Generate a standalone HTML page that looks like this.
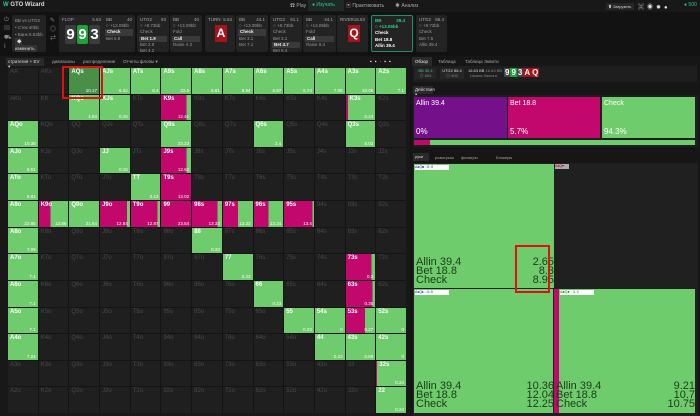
<!DOCTYPE html>
<html><head><meta charset="utf-8"><style>
*{box-sizing:border-box;margin:0;padding:0}
body{width:700px;height:416px;overflow:hidden;background:#121212;font-family:"Liberation Sans","Noto Sans CJK SC",sans-serif;color:#ccc;position:relative}
.a{position:absolute}
.top{left:0;top:0;width:700px;height:12px;background:#181818}
.card{background:#232323;border-radius:2px;top:15px;height:37px;font-size:4.5px;color:#999;padding:2px 3px;line-height:6.2px}
.card .h{display:flex;justify-content:space-between;color:#aaa}
.card .s{background:#3a3a3a;color:#eee;font-weight:bold;padding:0 2px;margin:0 -1px}
.pc{width:11px;height:19px;border-radius:2px;color:#fff;font-weight:bold;font-size:15px;text-align:center;line-height:19px;display:inline-block}
#grid{left:8px;top:68px;width:398px;height:345px;display:grid;grid-template-columns:repeat(13,1fr);grid-template-rows:repeat(13,1fr);gap:1px;background:#141414}
.c{background:#1f1f1f;position:relative;font-size:6px;color:#4a4a4a;padding:1px 2px}
.c b{font-weight:normal}
.g{background:#6fcc6c;color:#fff}
.g b,.m b{font-weight:bold;color:#fff}
.m{background:#c2086c}
.c i{position:absolute;right:2px;bottom:1px;font-style:normal;font-size:4.5px;color:#fff}
.tab{font-size:4.5px;color:#aaa;top:60px}
.hand{font-size:11px;color:#1c3a1c;line-height:9px}
</style></head><body>
<div class="a top"></div>
<div class="a" style="left:3px;top:2px;font-size:6px;color:#ddd;font-weight:bold"><span style="color:#2ecc8a">W</span> GTO Wizard</div>
<div class="a" style="left:290px;top:2px;font-size:5px;color:#aaa">☎ Play</div>
<div class="a" style="left:308px;top:0;width:36px;height:11px;background:#1e2a26"></div>
<div class="a" style="left:312px;top:2px;font-size:5px;color:#2ecc8a">● Изучать</div>
<div class="a" style="left:346px;top:2px;font-size:5px;color:#aaa">▣ Практиковать</div>
<div class="a" style="left:395px;top:2px;font-size:5px;color:#aaa">☀ Анализ</div>
<div class="a" style="left:606px;top:3px;width:28px;height:7px;background:#262626;font-size:4px;color:#ddd;padding:1px 2px">⬆ Загрузить</div>
<div class="a" style="left:638px;top:2px;font-size:6px;color:#ddd;letter-spacing:3px">⌘◉✹●</div>
<div class="a" style="left:684px;top:2px;font-size:5px;color:#2ecc8a">● 500</div>

<div class="a" style="left:4px;top:16px;font-size:6px;color:#888;line-height:9px">⏻<br>▤<br>⛟<br>I</div>
<div class="a card" style="left:12px;width:34px;line-height:7px">BB vs UTG2<br>• Стек 40bb<br>• Банк 5.63bb<br><span style="background:#333;color:#ddd;padding:1px 2px">◆ изменить</span></div>
<div class="a" style="left:50px;top:17px;font-size:6px;color:#888;line-height:9px">✎<br>◎<br>⇄</div>
<div class="a card" style="left:59px;width:45px"><div class="h"><span>FLOP</span><span>5.63</span></div>
<div style="margin-top:2px;margin-left:3px"><span class="pc" style="background:#3c3c3c">9</span><span class="pc" style="background:#1ea33b;margin:0 1px">9</span><span class="pc" style="background:#3c3c3c">3</span></div></div>
<div class="a card" style="left:103px;width:32px"><div class="h"><span>BB</span><span>40</span></div>○ +13.09bb<div class="s">Check</div>Bet 6.9</div>
<div class="a card" style="left:137px;width:32px"><div class="h"><span>UTG2</span><span>93</span></div>○ +8.73bb<br>Check<div class="s">Bet 1.9</div>Bet 2.8<br>Bet 4.2</div>
<div class="a card" style="left:170px;width:32px"><div class="h"><span>BB</span><span>40</span></div>○ +13.09bb<br>Fold<div class="s">Call</div>Raise 4.3</div>
<div class="a card" style="left:205px;width:30px"><div class="h"><span>TURN</span><span>5.63</span></div><div style="margin:2px 0 0 7px;width:12px;height:17px;background:#a8121c;color:#fff;font-weight:bold;font-size:12px;text-align:center;line-height:17px">A</div></div>
<div class="a card" style="left:236px;width:32px"><div class="h"><span>BB</span><span>44.1</span></div>○ +13.09bb<div class="s">Check</div>Bet 3.1<br>Bet 7.1</div>
<div class="a card" style="left:270px;width:32px"><div class="h"><span>UTG2</span><span>91.1</span></div>○ +8.73bb<br>Check<br>Bet 3.1<div class="s">Bet 4.7</div>Bet 9.4</div>
<div class="a card" style="left:303px;width:33px"><div class="h"><span>BB</span><span>44.1</span></div>○ +13.09bb<br>Fold<div class="s">Call</div>Raise 9.4</div>
<div class="a card" style="left:337px;width:31px"><div class="h"><span>RIVER</span><span>16.83</span></div><div style="margin:2px 0 0 8px;width:12px;height:17px;background:#a8121c;color:#fff;font-weight:bold;font-size:12px;text-align:center;line-height:17px">Q</div></div>
<div class="a card" style="left:371px;width:42px;border:1px solid #1f8f74;color:#fff;font-weight:bold"><div class="h" style="color:#2ecc8a;width:30px"><span>BB</span><span>39.4</span></div><span style="color:#2ecc8a">○ +13.09bb</span><br>Check<br>Bet 18.8<br>Allin 39.4</div>
<div class="a card" style="left:416px;width:31px"><div class="h"><span>UTG2</span><span>86.4</span></div>○ +8.73bb<br>Check<br>Bet 7.5<br>Allin 39.4</div>

<div class="a" style="left:0;top:56px;width:410px;height:360px;background:#181818"></div>
<div class="a tab" style="left:6px;top:58px;width:38px;height:8px;background:#2a2a2a;color:#ddd;padding:1px 2px">стратегия + EV ▾</div>
<div class="a tab" style="left:52px;top:59px">диапазоны</div>
<div class="a tab" style="left:83px;top:59px">распределение</div>
<div class="a tab" style="left:123px;top:59px">Отчеты флопы ▾</div>
<div class="a" style="left:370px;top:59px;font-size:5px;color:#eee;letter-spacing:3px">▪▪·▪▪</div>

<div class="a" id="grid">
<div class="c"><b>AA</b></div><div class="c"><b>AKs</b></div><div class="c g" style="background:#4a8f47"><b>AQs</b><i>10.17</i></div><div class="c g"><b>AJs</b><i>6.32</i></div><div class="c g"><b>ATs</b><i>6.4</i></div><div class="c g"><b>A9s</b><i>22.5</i></div><div class="c g"><b>A8s</b><i>6.61</i></div><div class="c g"><b>A7s</b><i>6.94</i></div><div class="c g"><b>A6s</b><i>6.87</i></div><div class="c g"><b>A5s</b><i>6.74</i></div><div class="c g"><b>A4s</b><i>7.08</i></div><div class="c g"><b>A3s</b><i>10.06</i></div><div class="c g"><b>A2s</b><i>7.1</i></div>
<div class="c"><b>AKo</b></div><div class="c"><b>KK</b></div><div class="c g"><b>KQs</b><i>1.84</i></div><div class="c g"><b>KJs</b><i>0.16</i></div><div class="c"><b>KTs</b></div><div class="c m" style="background:linear-gradient(90deg,#c2086c 85%,#6fcc6c 85%)"><b>K9s</b><i>12.41</i></div><div class="c"><b>K8s</b></div><div class="c"><b>K7s</b></div><div class="c"><b>K6s</b></div><div class="c"><b>K5s</b></div><div class="c"><b>K4s</b></div><div class="c g" style="border-left:2px solid #c2086c"><b>K3s</b><i>0.24</i></div><div class="c"><b>K2s</b></div>
<div class="c g"><b>AQo</b><i>10.38</i></div><div class="c"><b>KQo</b></div><div class="c"><b>QQ</b></div><div class="c"><b>QJs</b></div><div class="c"><b>QTs</b></div><div class="c g"><b>Q9s</b><i>23.23</i></div><div class="c"><b>Q8s</b></div><div class="c"><b>Q7s</b></div><div class="c g"><b>Q6s</b><i>2.4</i></div><div class="c"><b>Q5s</b></div><div class="c"><b>Q4s</b></div><div class="c g"><b>Q3s</b><i>5.03</i></div><div class="c"><b>Q2s</b></div>
<div class="c g"><b>AJo</b><i>6.51</i></div><div class="c"><b>KJo</b></div><div class="c"><b>QJo</b></div><div class="c g"><b>JJ</b><i>0.16</i></div><div class="c"><b>JTs</b></div><div class="c m" style="background:linear-gradient(90deg,#c2086c 85%,#6fcc6c 85%)"><b>J9s</b><i>12.62</i></div><div class="c"><b>J8s</b></div><div class="c"><b>J7s</b></div><div class="c"><b>J6s</b></div><div class="c"><b>J5s</b></div><div class="c"><b>J4s</b></div><div class="c"><b>J3s</b></div><div class="c"><b>J2s</b></div>
<div class="c g"><b>ATo</b><i>6.81</i></div><div class="c"><b>KTo</b></div><div class="c"><b>QTo</b></div><div class="c"><b>JTo</b></div><div class="c g"><b>TT</b><i>0.13</i></div><div class="c m"><b>T9s</b><i>13.02</i></div><div class="c"><b>T8s</b></div><div class="c"><b>T7s</b></div><div class="c"><b>T6s</b></div><div class="c"><b>T5s</b></div><div class="c"><b>T4s</b></div><div class="c"><b>T3s</b></div><div class="c"><b>T2s</b></div>
<div class="c g"><b>A9o</b><i>22.85</i></div><div class="c m" style="background:linear-gradient(90deg,#c2086c 40%,#6fcc6c 40%)"><b>K9o</b><i>12.86</i></div><div class="c g"><b>Q9o</b><i>21.64</i></div><div class="c m" style="background:linear-gradient(90deg,#c2086c 90%,#6fcc6c 90%)"><b>J9o</b><i>12.84</i></div><div class="c m" style="background:linear-gradient(90deg,#c2086c 92%,#6fcc6c 92%)"><b>T9o</b><i>12.87</i></div><div class="c m"><b>99</b><i>23.54</i></div><div class="c m" style="background:linear-gradient(90deg,#c2086c 85%,#6fcc6c 85%)"><b>98s</b><i>13.33</i></div><div class="c m" style="background:linear-gradient(90deg,#c2086c 50%,#6fcc6c 50%)"><b>97s</b><i>13.33</i></div><div class="c m" style="background:linear-gradient(90deg,#c2086c 50%,#6fcc6c 50%)"><b>96s</b><i>13.34</i></div><div class="c m" style="background:linear-gradient(90deg,#c2086c 95%,#6fcc6c 95%)"><b>95s</b><i>13.4</i></div><div class="c"><b>94s</b></div><div class="c"><b>93s</b></div><div class="c"><b>92s</b></div>
<div class="c g"><b>A8o</b><i>7.08</i></div><div class="c"><b>K8o</b></div><div class="c"><b>Q8o</b></div><div class="c"><b>J8o</b></div><div class="c"><b>T8o</b></div><div class="c"><b>98o</b></div><div class="c g"><b>88</b><i>0.23</i></div><div class="c"><b>87s</b></div><div class="c"><b>86s</b></div><div class="c"><b>85s</b></div><div class="c"><b>84s</b></div><div class="c"><b>83s</b></div><div class="c"><b>82s</b></div>
<div class="c g"><b>A7o</b><i>7.1</i></div><div class="c"><b>K7o</b></div><div class="c"><b>Q7o</b></div><div class="c"><b>J7o</b></div><div class="c"><b>T7o</b></div><div class="c"><b>97o</b></div><div class="c"><b>87o</b></div><div class="c g"><b>77</b><i>0.23</i></div><div class="c"><b>76s</b></div><div class="c"><b>75s</b></div><div class="c"><b>74s</b></div><div class="c m" style="background:linear-gradient(90deg,#c2086c 88%,#6fcc6c 88%)"><b>73s</b><i>0.3</i></div><div class="c"><b>72s</b></div>
<div class="c g"><b>A6o</b><i>7.1</i></div><div class="c"><b>K6o</b></div><div class="c"><b>Q6o</b></div><div class="c"><b>J6o</b></div><div class="c"><b>T6o</b></div><div class="c"><b>96o</b></div><div class="c"><b>86o</b></div><div class="c"><b>76o</b></div><div class="c g"><b>66</b><i>0.23</i></div><div class="c"><b>65s</b></div><div class="c"><b>64s</b></div><div class="c m" style="background:linear-gradient(90deg,#c2086c 92%,#6fcc6c 92%)"><b>63s</b><i>0.35</i></div><div class="c"><b>62s</b></div>
<div class="c g"><b>A5o</b><i>7.1</i></div><div class="c"><b>K5o</b></div><div class="c"><b>Q5o</b></div><div class="c"><b>J5o</b></div><div class="c"><b>T5o</b></div><div class="c"><b>95o</b></div><div class="c"><b>85o</b></div><div class="c"><b>75o</b></div><div class="c"><b>65o</b></div><div class="c g"><b>55</b><i>0.23</i></div><div class="c g"><b>54s</b><i>0</i></div><div class="c m" style="background:linear-gradient(90deg,#c2086c 65%,#6fcc6c 65%)"><b>53s</b><i>0.27</i></div><div class="c g"><b>52s</b><i>0</i></div>
<div class="c g"><b>A4o</b><i>7.24</i></div><div class="c"><b>K4o</b></div><div class="c"><b>Q4o</b></div><div class="c"><b>J4o</b></div><div class="c"><b>T4o</b></div><div class="c"><b>94o</b></div><div class="c"><b>84o</b></div><div class="c"><b>74o</b></div><div class="c"><b>64o</b></div><div class="c"><b>54o</b></div><div class="c g"><b>44</b><i>0.23</i></div><div class="c g"><b>43s</b><i>0.69</i></div><div class="c g"><b>42s</b><i>0</i></div>
<div class="c"><b>A3o</b></div><div class="c"><b>K3o</b></div><div class="c"><b>Q3o</b></div><div class="c"><b>J3o</b></div><div class="c"><b>T3o</b></div><div class="c"><b>93o</b></div><div class="c"><b>83o</b></div><div class="c"><b>73o</b></div><div class="c"><b>63o</b></div><div class="c"><b>53o</b></div><div class="c"><b>43o</b></div><div class="c"><b>33</b></div><div class="c g" style="border-left:1px solid #c2086c"><b>32s</b><i>0.24</i></div>
<div class="c"><b>A2o</b></div><div class="c"><b>K2o</b></div><div class="c"><b>Q2o</b></div><div class="c"><b>J2o</b></div><div class="c"><b>T2o</b></div><div class="c"><b>92o</b></div><div class="c"><b>82o</b></div><div class="c"><b>72o</b></div><div class="c"><b>62o</b></div><div class="c"><b>52o</b></div><div class="c"><b>42o</b></div><div class="c"><b>32o</b></div><div class="c g"><b>22</b><i>0.24</i></div>
</div>
<div class="a" style="left:62px;top:66px;width:41px;height:33px;border:2px solid #e01010"></div>

<!-- right panel -->
<div class="a" style="left:411px;top:56px;width:289px;height:360px;background:#161616"></div>
<div class="a tab" style="left:412px;top:57px;width:20px;height:9px;background:#2a2a2a;color:#eee;padding:2px 3px">Обзор</div>
<div class="a tab" style="left:438px;top:59px">Таблица</div>
<div class="a tab" style="left:465px;top:59px">Таблица Эквити</div>
<div class="a" style="left:413px;top:66px;width:284px;height:16px;background:#1e1e1e"></div>
<div class="a" style="left:415px;top:68px;width:21px;height:11px;background:#262626;font-size:4px;color:#2ecc8a;text-align:center;line-height:5px">BB 39.4<br><span style="color:#888">⊙ 600</span></div>
<div class="a" style="left:440px;top:68px;width:24px;height:11px;background:#262626;font-size:4px;color:#ddd;text-align:center;line-height:5px">UTG2 86.4<br><span style="color:#888">⊙ 400</span></div>
<div class="a" style="left:468px;top:68px;font-size:4px;color:#ddd;line-height:5px">16.83 BB <span style="color:#888">16.83 BB</span><br><span style="color:#888">&nbsp; Шкала банка ▸</span></div>
<div class="a" style="left:504px;top:68px;font-size:8px;font-weight:bold;color:#fff"><span style="background:#444;padding:0 1px">9</span><span style="background:#1ea33b;padding:0 1px">9</span><span style="background:#444;padding:0 1px">3</span><span style="background:#a8121c;padding:0 1px">A</span><span style="background:#a8121c;padding:0 1px">Q</span></div>
<div class="a tab" style="left:413px;top:86px;width:20px;height:8px;background:#2a2a2a;color:#ddd;padding:1px 2px">Действия ▾</div>
<div class="a" style="left:413px;top:95px;width:285px;height:52px;background:#1e1e1e"></div>
<div class="a" style="left:414px;top:97px;width:93px;height:41px;background:#74108a;color:#fff;padding:3px 2px;font-size:7px">Allin 39.4<div style="position:absolute;bottom:2px;font-size:8px">0%</div></div>
<div class="a" style="left:508px;top:97px;width:92px;height:41px;background:#c2086c;color:#fff;padding:3px 2px;font-size:7px">Bet 18.8<div style="position:absolute;bottom:2px;font-size:8px">5.7%</div></div>
<div class="a" style="left:602px;top:97px;width:93px;height:41px;background:#6fcc6c;color:#fff;padding:3px 2px;font-size:7px">Check<div style="position:absolute;bottom:2px;font-size:8px">94.3%</div></div>
<div class="a" style="left:414px;top:140px;width:16px;height:5px;background:#c2086c"></div>
<div class="a" style="left:430px;top:140px;width:265px;height:5px;background:#6fcc6c"></div>
<div class="a tab" style="left:413px;top:153px;width:16px;height:8px;background:#2a2a2a;color:#ddd;padding:1px 2px;font-size:4px">руки</div>
<div class="a tab" style="left:435px;top:155px;font-size:4px">розыгрыш</div>
<div class="a tab" style="left:461px;top:155px;font-size:4px">фильтры</div>
<div class="a tab" style="left:496px;top:155px;font-size:4px">Блокеры</div>
<div class="a" style="left:413px;top:163px;width:285px;height:253px;background:#202020"></div>
<div class="a" style="left:414px;top:164px;width:140px;height:124px;background:#6fcc6c"></div>
<div class="a" style="left:414px;top:289px;width:139px;height:124px;background:#6fcc6c"></div>
<div class="a" style="left:554px;top:289px;width:5px;height:124px;background:#c2086c"></div>
<div class="a" style="left:559px;top:289px;width:136px;height:124px;background:#6fcc6c"></div>
<div class="a" style="left:555px;top:164px;width:14px;height:5px;background:#aaa;font-size:3.5px;color:#a00">A♠Q♥</div>
<div class="a" style="left:415px;top:165px;width:34px;height:5px;background:#fff;font-size:3.5px;color:#00c">A♠Q♣ ◌0◌0</div>
<div class="a" style="left:415px;top:290px;width:34px;height:5px;background:#fff;font-size:3.5px;color:#00c">A♠Q♦ ◌4◌0</div>
<div class="a" style="left:560px;top:290px;width:34px;height:5px;background:#fff;font-size:3.5px;color:#080">A♣Q♣ ◌3◌0</div>
<div class="a hand" style="left:416px;top:258px;width:138px">Allin 39.4<span style="float:right">2.65</span><br>Bet 18.8<span style="float:right">8.3</span><br>Check<span style="float:right">8.95</span></div>
<div class="a hand" style="left:416px;top:382px;width:138px">Allin 39.4<span style="float:right">10.36</span><br>Bet 18.8<span style="float:right">12.04</span><br>Check<span style="float:right">12.25</span></div>
<div class="a hand" style="left:556px;top:382px;width:139px">Allin 39.4<span style="float:right">9.21</span><br>Bet 18.8<span style="float:right">10.7</span><br>Check<span style="float:right">10.75</span></div>
<div class="a" style="left:515px;top:245px;width:35px;height:48px;border:2px solid #e01010"></div>
</body></html>
